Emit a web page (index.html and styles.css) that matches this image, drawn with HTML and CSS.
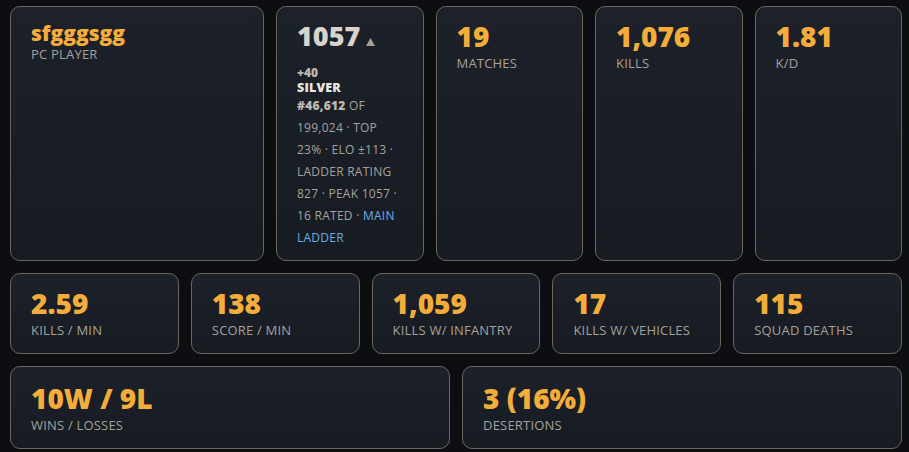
FILE: index.html
```html
<!DOCTYPE html>
<html lang="en">

<head>
  <meta charset="UTF-8">
  <meta name="viewport" content="width=device-width, initial-scale=1.0">
  <title>Player Stats</title>
  <link rel="stylesheet" href="styles.css">
</head>

<body>

  <main class="stats">
    <section class="stats__row stats__row--top">
      <div class="card">
        <div class="card__name">sfgggsgg</div>
        <div class="card__label">PC Player</div>
      </div>

      <div class="card card--rating">
        <div class="card__value card__value--rating">1057<svg class="card__trend" width="9" height="8" viewBox="0 0 9 8" aria-hidden="true">
            <polygon points="4.5,0 9,8 0,8" fill="#a7a195" />
          </svg>
        </div>
        <div class="rating__delta">+40</div>
        <div class="rating__tier">Silver</div>
        <p class="rating__info">
          <b>#46,612</b> of 199,024 · top 23% · ELO ±113 · ladder rating 827 · peak 1057 · 16 rated ·
          <a href="#">main ladder</a>
        </p>
      </div>

      <div class="card">
        <div class="card__value">19</div>
        <div class="card__label">Matches</div>
      </div>

      <div class="card">
        <div class="card__value">1,076</div>
        <div class="card__label">Kills</div>
      </div>

      <div class="card">
        <div class="card__value">1.81</div>
        <div class="card__label">K/D</div>
      </div>
    </section>

    <section class="stats__row stats__row--five">
      <div class="card">
        <div class="card__value">2.59</div>
        <div class="card__label">Kills / min</div>
      </div>
      <div class="card">
        <div class="card__value">138</div>
        <div class="card__label">Score / min</div>
      </div>
      <div class="card">
        <div class="card__value">1,059</div>
        <div class="card__label">Kills w/ infantry</div>
      </div>
      <div class="card">
        <div class="card__value">17</div>
        <div class="card__label">Kills w/ vehicles</div>
      </div>
      <div class="card">
        <div class="card__value">115</div>
        <div class="card__label">Squad deaths</div>
      </div>
    </section>

    <section class="stats__row stats__row--two">
      <div class="card card--wide">
        <div class="card__value">10W / 9L</div>
        <div class="card__label">Wins / losses</div>
      </div>
      <div class="card card--wide">
        <div class="card__value">3 (16%)</div>
        <div class="card__label">Desertions</div>
      </div>
    </section>
  </main>

</body>

</html>
```

FILE: styles.css
```css
*,
*:after,
*:before {
  margin: 0;
  padding: 0;
  box-sizing: border-box;
}

body {
  font-family: "Open Sans", "Liberation Sans", sans-serif;
  background: #0c0e12;
  color: #a6a29b;
}

.stats {
  display: flex;
  flex-direction: column;
  gap: 12px;
  padding: 6px 7px 4px 10px;
}

.stats__row {
  display: grid;
  gap: 12px;
}

.stats__row--top {
  grid-template-columns: 254px repeat(4, 1fr);
}

.stats__row--five {
  grid-template-columns: repeat(5, 1fr);
}

.stats__row--two {
  grid-template-columns: repeat(2, 1fr);
}

.card {
  background: linear-gradient(180deg, #1c212a 0%, #171b22 100%);
  border: 1px solid #6d665b;
  border-radius: 10px;
  padding: 14px 20px 14px;
}

.card--wide {
  padding-top: 16px;
}

.card__name {
  font-size: 21px;
  line-height: 24px;
  font-weight: 800;
  color: #f4ad3b;
}

.card__value {
  font-size: 28px;
  line-height: 30px;
  font-weight: 800;
  color: #f4ad3b;
  white-space: nowrap;
}

.card__value--rating {
  font-size: 27px;
  color: #d8d4cc;
}

.card__trend {
  margin-left: 6px;
  vertical-align: 0;
}

.card__label {
  margin-top: 4px;
  font-size: 13px;
  line-height: 17px;
  letter-spacing: 0.2px;
  text-transform: uppercase;
  color: #a6a29b;
}

.card__name + .card__label {
  margin-top: 1px;
}

.card--rating {
  padding-bottom: 11px;
}

.rating__delta {
  margin-top: 15px;
  font-size: 12px;
  line-height: 14px;
  font-weight: 800;
  color: #bdb8ae;
}

.rating__tier {
  font-size: 12.5px;
  line-height: 15px;
  font-weight: 800;
  letter-spacing: 0.2px;
  text-transform: uppercase;
  color: #ebe7df;
}

.rating__info {
  font-size: 12px;
  line-height: 22px;
  letter-spacing: 0.25px;
  text-transform: uppercase;
  color: #a6a29b;
}

.rating__info b {
  font-weight: 800;
  color: #bdb8ae;
}

.rating__info a {
  color: #6aaee3;
  text-decoration: none;
}
```
